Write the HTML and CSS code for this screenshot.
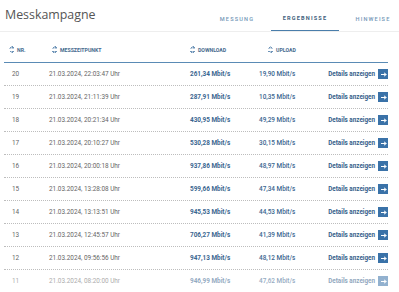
FILE: index.html
```html
<!doctype html>
<html>
<head>
<meta charset="utf-8">
<title>Messkampagne</title>
<link rel="stylesheet" href="styles.css">
</head>
<body>
<div class="page">
	<div class="top">
		<h1 class="title">Messkampagne</h1>
		<ul class="tabs">
			<li>MESSUNG</li>
			<li class="active">ERGEBNISSE</li>
			<li>HINWEISE</li>
		</ul>
	</div>
	<div class="results">
		<div class="row head">
			<div class="h-nr"><span class="sort"></span>NR.</div>
			<div class="h-time"><span class="sort"></span>MESSZEITPUNKT</div>
			<div class="h-down"><span class="sort"></span>DOWNLOAD</div>
			<div class="h-up"><span class="sort"></span>UPLOAD</div>
			<div></div>
		</div>
		<div class="row"><div class="nr">20</div><div>21.03.2024, 22:03:47 Uhr</div><div class="down">261,34 Mbit/s</div><div class="up">19,90 Mbit/s</div><div class="det">Details anzeigen <span class="go"></span></div></div>
		<div class="row"><div class="nr">19</div><div>21.03.2024, 21:11:39 Uhr</div><div class="down">287,91 Mbit/s</div><div class="up">10,35 Mbit/s</div><div class="det">Details anzeigen <span class="go"></span></div></div>
		<div class="row"><div class="nr">18</div><div>21.03.2024, 20:21:34 Uhr</div><div class="down">430,95 Mbit/s</div><div class="up">49,29 Mbit/s</div><div class="det">Details anzeigen <span class="go"></span></div></div>
		<div class="row"><div class="nr">17</div><div>21.03.2024, 20:10:27 Uhr</div><div class="down">530,28 Mbit/s</div><div class="up">30,15 Mbit/s</div><div class="det">Details anzeigen <span class="go"></span></div></div>
		<div class="row"><div class="nr">16</div><div>21.03.2024, 20:00:18 Uhr</div><div class="down">937,86 Mbit/s</div><div class="up">48,97 Mbit/s</div><div class="det">Details anzeigen <span class="go"></span></div></div>
		<div class="row"><div class="nr">15</div><div>21.03.2024, 13:28:08 Uhr</div><div class="down">599,66 Mbit/s</div><div class="up">47,34 Mbit/s</div><div class="det">Details anzeigen <span class="go"></span></div></div>
		<div class="row"><div class="nr">14</div><div>21.03.2024, 13:13:51 Uhr</div><div class="down">945,53 Mbit/s</div><div class="up">44,53 Mbit/s</div><div class="det">Details anzeigen <span class="go"></span></div></div>
		<div class="row"><div class="nr">13</div><div>21.03.2024, 12:45:57 Uhr</div><div class="down">706,27 Mbit/s</div><div class="up">41,39 Mbit/s</div><div class="det">Details anzeigen <span class="go"></span></div></div>
		<div class="row"><div class="nr">12</div><div>21.03.2024, 09:56:56 Uhr</div><div class="down">947,13 Mbit/s</div><div class="up">48,12 Mbit/s</div><div class="det">Details anzeigen <span class="go"></span></div></div>
		<div class="row fade"><div class="nr">11</div><div>21.03.2024, 08:20:00 Uhr</div><div class="down">946,99 Mbit/s</div><div class="up">47,62 Mbit/s</div><div class="det">Details anzeigen <span class="go"></span></div></div>
	</div>
</div>
</body>
</html>
```
FILE: styles.css
```css
*{margin: 0; padding: 0;}
body { background: #fff; font-family: Roboto, "Liberation Sans", sans-serif; color: #555; overflow: hidden;}
.page { width: 399px; }
/*-----------------------------------------------*/
.top {
	display: flex;
	align-items: center;
	justify-content: space-between;
	height: 31px;
	border-bottom: 1px solid #eee;
	padding-left: 5px;
}
.title {
	font-family: "Open Sans", sans-serif;
	font-weight: 400;
	font-size: 12.4px;
	color: #555;
	margin-top: -2px;
}
.tabs { display: flex; list-style: none; height: 100%; margin-right: -8px;}
.tabs li {
	width: 68px;
	display: flex;
	align-items: center;
	justify-content: center;
	font-size: 5.6px;
	letter-spacing: 1.15px;
	color: #7497b7;
	font-weight: 500;
	padding-top: 6px;
	box-sizing: border-box;
}
.tabs li.active {
	color: #3f5f7d;
	font-weight: 700;
	border-bottom: 1.5px solid #4a7eab;
}
/*-----------------------------------------------*/
.results {
	margin-left: 4px;
	width: 384px;
	font-size: 6.4px;
}
.row {
	display: grid;
	grid-template-columns: 45px 141px 69px 1fr auto;
	align-items: center;
	height: 22px;
	border-bottom: 1px dotted #bdbdbd;
	color: #666;
	white-space: nowrap;
}
.row.head {
	padding-top: 1px;
	font-size: 5.2px;
	font-weight: 700;
	color: #44698d;
	border-bottom: 1.5px solid #5a8bb5;
	align-items: end;
	padding-bottom: 9px;
	box-sizing: border-box;
	height: 31px;
}
.h-nr { padding-left: 5px;}
.h-time { padding-left: 3px;}
.h-up { padding-left: 9px;}
.sort {
	display: inline-block;
	width: 5px;
	height: 7px;
	margin-right: 3px;
	vertical-align: -1.5px;
	background:
		linear-gradient(to bottom right, transparent 50%, #6e94b8 50%) 0 0/2.5px 2.5px no-repeat,
		linear-gradient(to bottom left, transparent 50%, #6e94b8 50%) 2.5px 0/2.5px 2.5px no-repeat,
		linear-gradient(to top right, transparent 50%, #6e94b8 50%) 0 4.5px/2.5px 2.5px no-repeat,
		linear-gradient(to top left, transparent 50%, #6e94b8 50%) 2.5px 4.5px/2.5px 2.5px no-repeat;
}
.nr { padding-left: 8px;}
.down { color: #3a6690; font-weight: 700;}
.up { color: #3a6690; font-weight: 500;}
.det {
	display: flex;
	align-items: center;
	color: #35608a;
	font-weight: 700;
	font-size: 6.3px;
}
.go {
	width: 10px;
	height: 10px;
	margin-left: 3px;
	background: #3a72a8;
	position: relative;
}
.go:before {
	content: "";
	position: absolute;
	left: 2.5px;
	top: 4.5px;
	width: 4.5px;
	height: 1px;
	background: #fff;
}
.go:after {
	content: "";
	position: absolute;
	left: 4.6px;
	top: 3.5px;
	width: 2px;
	height: 2px;
	border-top: 1px solid #fff;
	border-right: 1px solid #fff;
	transform: rotate(45deg);
}
.row.fade { opacity: .55; border-bottom: 0;}
```
